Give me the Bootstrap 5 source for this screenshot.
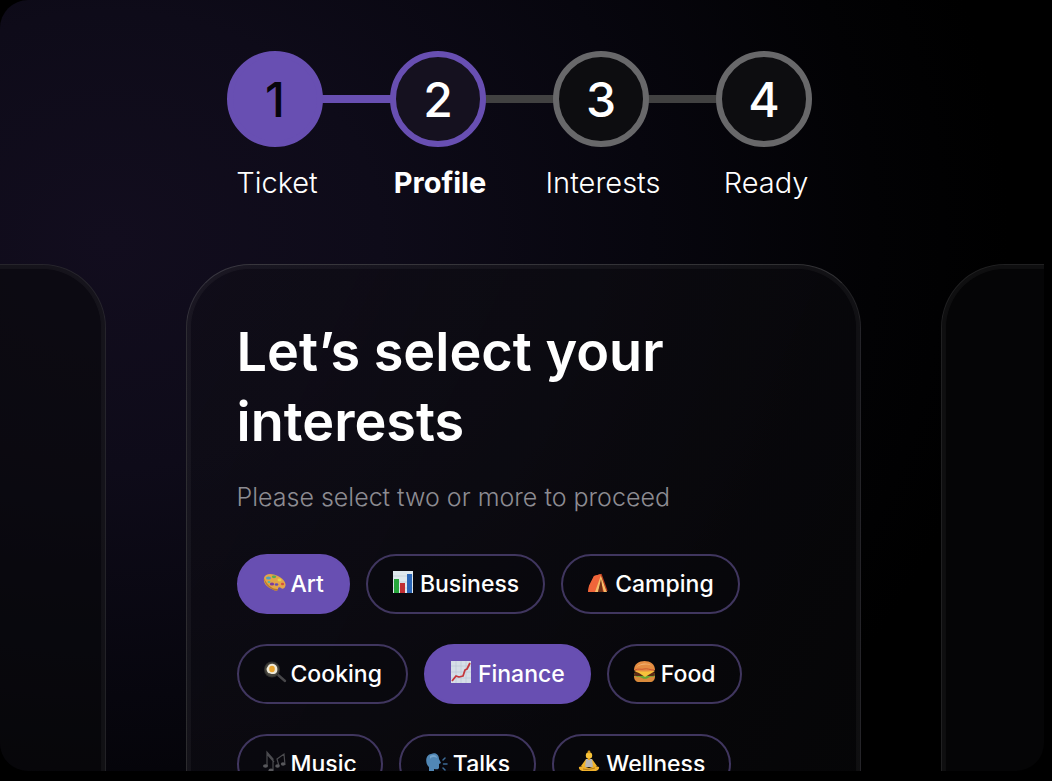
<!DOCTYPE html>
<html lang="en" data-bs-theme="dark">
<head>
<meta charset="utf-8">
<meta name="viewport" content="width=device-width, initial-scale=1">
<title>Let’s select your interests</title>
<link href="https://cdn.jsdelivr.net/npm/bootstrap@5.3.0/dist/css/bootstrap.min.css" rel="stylesheet">
<style>
  :root { --brand: #684fb2; --ring: #68686a; --rail: #414141; }
  body { background: #000; color: #fff; font-family: Inter, "Open Sans", sans-serif; padding: 0 8px 10px 0; }
  .stage {
    border-radius: 28px;
    background: radial-gradient(ellipse 900px 760px at 110px 240px, #120d1e 0, #0e0b19 30%, #07060e 60%, #020204 85%, #000 100%) #000;
  }
  .steps { padding: 51px 5px 0 0; }
  .step { width: 163px; position: relative; isolation: isolate; }
  .step-dot {
    width: 96px; height: 96px; border: 6px solid var(--ring); background: #0d0d10;
    font-size: 48px; line-height: 48px; font-weight: 500; padding-top: 2px;
  }
  .step:not(:last-child)::after {
    content: ""; position: absolute; z-index: -1; top: 44px; left: calc(50% + 46px); width: calc(100% - 92px); height: 8px; background: var(--rail);
  }
  .step.is-done::after { background: var(--brand); }
  .is-done .step-dot { border-color: var(--brand); background: var(--brand); color: #06040c; }
  .is-current .step-dot { border-color: var(--brand); background: #15111f; }
  .step-label { font-size: 29px; line-height: 40px; font-weight: 300; padding-left: 4px; margin-top: 16px; }
  .is-current .step-label { font-weight: 700; }
  .deck { gap: 80px; margin-top: 61px; padding-left: 2px; }
  .panel {
    flex: 0 0 auto; width: min(675px, 92%); border-radius: 64px; border: 1px solid;
    border-color: #ffffff2c #ffffff1c #ffffff1c #ffffff26;
    background: linear-gradient(115deg, #100e1799 0, #0d0c11b0 45%, #070709c0 100%);
    box-shadow: inset 0 0 0 4px #ffffff09, inset 0 0 4px 4px #ffffff04;
    padding: 52px 50px 60px;
  }
  .panel-side { border-color: #ffffff1c; background: #09090b90; }
  .panel h1 { font-size: 54px; line-height: 70px; font-weight: 600; margin-bottom: 20px; }
  .hint { font-size: 25px; line-height: 40px; font-weight: 300; color: #8d8c92; margin-bottom: 37px; }
  .chips { gap: 30px 16px; }
  .chip {
    height: 60px; padding: 0 24px; border: 2px solid #40365f; background: #08070c66; color: #fff;
    font-size: 23px; line-height: 32px; font-weight: 500; gap: 4px;
  }
  .chip:hover { color: #fff; border-color: var(--brand); }
  .btn-check:checked + .chip { background: var(--brand); border-color: var(--brand); color: #fff; }
  .chip svg { width: 24px; height: 24px; margin-bottom: 4px; flex: none; }
</style>
</head>
<body class="vh-100 overflow-hidden">
<main class="stage h-100 overflow-hidden d-flex flex-column">
  <ol class="steps list-unstyled d-flex justify-content-center text-center mb-0">
    <li class="step is-done d-flex flex-column align-items-center"><span class="step-dot rounded-circle d-flex align-items-center justify-content-center">1</span><span class="step-label">Ticket</span></li>
    <li class="step is-current d-flex flex-column align-items-center" aria-current="step"><span class="step-dot rounded-circle d-flex align-items-center justify-content-center">2</span><span class="step-label">Profile</span></li>
    <li class="step d-flex flex-column align-items-center"><span class="step-dot rounded-circle d-flex align-items-center justify-content-center">3</span><span class="step-label">Interests</span></li>
    <li class="step d-flex flex-column align-items-center"><span class="step-dot rounded-circle d-flex align-items-center justify-content-center">4</span><span class="step-label">Ready</span></li>
  </ol>

  <div class="deck d-flex justify-content-center flex-grow-1">
    <div class="panel panel-side" aria-hidden="true"></div>
    <section class="panel">
      <h1>Let’s select your interests</h1>
      <p class="hint">Please select two or more to proceed</p>
      <div class="chips d-flex flex-wrap">
        <div><input class="btn-check" type="checkbox" id="art" checked>
        <label class="chip btn rounded-pill d-flex align-items-center" for="art">
          <svg viewBox="0 0 24 24" aria-hidden="true"><path d="M1 8C2 3 9 3 15 6c6 3 9 8 7 11-1 2-3 2-4 1s-3-1-3 1-3 2-6 0C4 17 0 13 1 8z" fill="#e3a548"/><path d="M1 8c0 5 4 9 8 11 3 2 6 2 6 0-5 1-12-5-14-11z" fill="#b87a2c"/><ellipse cx="5.500" cy="8" rx="2.500" ry="1.500" fill="#4c9fc4"/><ellipse cx="11" cy="6.800" rx="2.200" ry="1.400" fill="#58ad54"/><ellipse cx="16.500" cy="10" rx="2" ry="1.400" fill="#e8d346"/><ellipse cx="19.500" cy="14" rx="1.600" ry="1.300" fill="#d4503f"/><ellipse cx="9" cy="14" rx="2.200" ry="1.500" fill="#7e3c9c"/><ellipse cx="13.500" cy="14.500" rx="1.800" ry="1.300" fill="#684fb2"/><ellipse cx="6" cy="12" rx="1.500" ry="1" fill="#53b8a0"/></svg>
          <span>Art</span></label></div>
        <div><input class="btn-check" type="checkbox" id="business">
        <label class="chip btn rounded-pill d-flex align-items-center" for="business">
          <svg viewBox="0 0 24 24" aria-hidden="true"><path d="M1 1h20v22H1z" fill="#dfe9ee"/><path d="M1 6h20M1 12h20M1 18h20" stroke="#bccbd3" stroke-width=".6"/><path d="M2 9h5v14H2z" fill="#27a63c"/><path d="M8 13h5v10H8z" fill="#c12f33"/><path d="M15 4h5v19h-5z" fill="#2b67b8"/></svg>
          <span>Business</span></label></div>
        <div><input class="btn-check" type="checkbox" id="camping">
        <label class="chip btn rounded-pill d-flex align-items-center" for="camping">
          <svg viewBox="0 0 24 24" aria-hidden="true"><path d="M7 6l7-2 6 17-4 1H1l1-6z" fill="#e65b2f"/><path d="M7 6l7-2L9 22H1l1-6z" fill="#f0653a"/><path d="M14 5l-6 17h3l3-10 3 10h3z" fill="#f5bd69"/><path d="M14 9l-3 13h5z" fill="#6e3018"/><path d="M14 4l6 17" stroke="#b63e20" stroke-width="1.200"/></svg>
          <span>Camping</span></label></div>
        <div><input class="btn-check" type="checkbox" id="cooking">
        <label class="chip btn rounded-pill d-flex align-items-center" for="cooking">
          <svg viewBox="0 0 24 24" aria-hidden="true"><path d="M14 14l8 7" stroke="#47474a" stroke-width="2.400" stroke-linecap="round"/><circle cx="9" cy="9.500" r="8" fill="#30302e"/><circle cx="9" cy="9.500" r="7" fill="#45443d"/><path d="M5 6c2-3 7-3 9 1 1 3 0 7-3 7s-6 0-7-3 0-3 1-5z" fill="#eee9d8"/><ellipse cx="9" cy="9" rx="2.800" ry="3.300" fill="#e9a52f"/></svg>
          <span>Cooking</span></label></div>
        <div><input class="btn-check" type="checkbox" id="finance" checked>
        <label class="chip btn rounded-pill d-flex align-items-center" for="finance">
          <svg viewBox="0 0 24 24" aria-hidden="true"><path d="M1 1h20v22H1z" fill="#d6dee7"/><path d="M1 6h20M1 12h20M1 18h20M6 1v22M11 1v22M16 1v22" stroke="#b9c5d3" stroke-width=".6"/><path d="M2 21l4-5 3 1 4-1 2-6 2-1 3-6" fill="none" stroke="#c4363b" stroke-width="1.800" stroke-linejoin="round"/></svg>
          <span>Finance</span></label></div>
        <div><input class="btn-check" type="checkbox" id="food">
        <label class="chip btn rounded-pill d-flex align-items-center" for="food">
          <svg viewBox="0 0 24 24" aria-hidden="true"><path d="M1 16h21c0 4-2 6-5 6H6c-3 0-5-2-5-6z" fill="#d98a3b"/><path d="M1 15c3 3 5 1 8 3s6 0 8-1 4 1 5-2v-2H1z" fill="#67a534"/><rect x="1" y="12" width="21" height="4" rx="2" fill="#5c2b17"/><path d="M1 11h21l-5 3-5 3-6-4z" fill="#f7c33b"/><path d="M1 10c0-6 5-9 10.500-9S22 4 22 10c0 2-21 2-21 0z" fill="#e58d42"/><path d="M4 7c2-4 12-5 15-1-4-2-10-2-15 1z" fill="#f3b271"/><path d="M2 10c4-2 6 0 9-1s6 1 10 1" stroke="#cf5930" fill="none"/></svg>
          <span>Food</span></label></div>
        <div><input class="btn-check" type="checkbox" id="music">
        <label class="chip btn rounded-pill d-flex align-items-center" for="music">
          <svg viewBox="0 0 24 24" aria-hidden="true"><g fill="none" stroke="#4b4b4f" stroke-width="1.200"><path d="M4 16V2l6 7v11M4 4l7 8M16 16l-2-7 7-5 1 11"/></g><g fill="#58585c"><ellipse cx="2.500" cy="16" rx="2.500" ry="1.800"/><ellipse cx="8" cy="20.500" rx="2.600" ry="1.900"/><ellipse cx="14.500" cy="16" rx="2.300" ry="1.700"/><ellipse cx="20" cy="14" rx="2.200" ry="1.700"/></g></svg>
          <span>Music</span></label></div>
        <div><input class="btn-check" type="checkbox" id="talks">
        <label class="chip btn rounded-pill d-flex align-items-center" for="talks">
          <svg viewBox="0 0 24 24" aria-hidden="true"><path d="M4 22v-5C0 14 0 5 6 4c5-2 8 1 8 5l2 4-2 1v4c-1 2-3 1-5 1v3z" fill="#5187b5"/><path d="M5 6c3-2 7-1 7 2-3-2-6-1-7 1z" fill="#76a5cc"/><path d="M18 10l2-2M18.500 14h3.500M18 18l2 2" stroke="#3c6b96" stroke-width="1.500" stroke-linecap="round"/></svg>
          <span>Talks</span></label></div>
        <div><input class="btn-check" type="checkbox" id="wellness">
        <label class="chip btn rounded-pill d-flex align-items-center" for="wellness">
          <svg viewBox="0 0 24 24" aria-hidden="true"><path d="M8 9l-5 7 3 2 4-5M14 9l5 7-3 2-4-5" fill="#f0b42a"/><path d="M8 9h6l1 8H7z" fill="#b8b6b3"/><path d="M1 17c4-1 7 0 10 1 3-1 6-2 10-1 1 4-5 5-10 4-5 1-11 0-10-4z" fill="#efb02b"/><path d="M5 19c4 1 8 0 12-1" stroke="#b27a17" fill="none"/><circle cx="11" cy="5.500" r="3.200" fill="#f8c338"/><circle cx="11" cy="2" r="1.400" fill="#d5981f"/><path d="M10 8h2v2h-2z" fill="#e5a626"/></svg>
          <span>Wellness</span></label></div>
      </div>
    </section>
    <div class="panel panel-side" aria-hidden="true"></div>
  </div>
</main>
<script src="https://cdn.jsdelivr.net/npm/bootstrap@5.3.0/dist/js/bootstrap.bundle.min.js"></script>
</body>
</html>
